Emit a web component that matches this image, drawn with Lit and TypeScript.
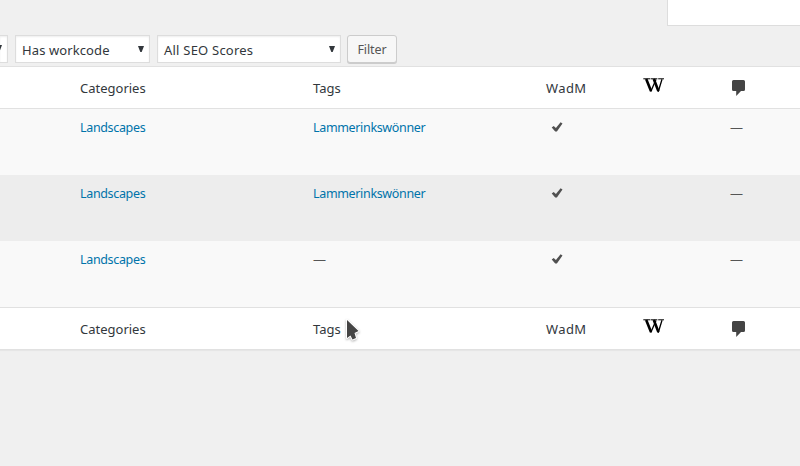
import { LitElement, html, css, svg } from "lit";
import { customElement } from "lit/decorators.js";

interface Post {
  category: string;
  tag: string;
}

const posts: Post[] = [
  { category: "Landscapes", tag: "Lammerinkswönner" },
  { category: "Landscapes", tag: "Lammerinkswönner" },
  { category: "Landscapes", tag: "" },
];

const arrow = html`<svg class="arrow" width="6" height="6" viewBox="0 0 6 6">
  <path d="M0 0H6L3.7 6H2.3Z" fill="#32373c" />
</svg>`;

const wikiIcon = html`<svg class="wiki" width="22" height="15" viewBox="0 0 22 15">
  ${svg`<g fill="none" stroke="#000">
    <path d="M0.3 .8H7.2M7.7 .8H14.4M15.2 .8H21" stroke-width="1" />
    <path d="M3.2 1L8 13M10.8 1L15.4 13" stroke-width="2.6" />
    <path d="M7.7 13.8L13 1.4M15.2 13.8L19 1.2" stroke-width="1.3" />
  </g>`}
</svg>`;

const commentIcon = html`<svg class="comment" width="14" height="16" viewBox="0 0 14 16">
  <path d="M1.5 0H11.5Q13 0 13 1.5V9.5Q13 11 11.5 11H9L4.2 16V11H1.5Q0 11 0 9.5V1.5Q0 0 1.5 0Z" fill="#444" />
</svg>`;

const checkIcon = html`<svg class="check" width="12" height="11" viewBox="0 0 12 11">
  <path d="M-.3 5.6L1.7 3.9L3.9 6L8.6 .2L10.5 1.6L4.9 9.6H3.2Z" fill="#505050" />
</svg>`;

@customElement("app-root")
export class AppRoot extends LitElement {
  static styles = css`
    :host {
      display: block;
      position: relative;
      width: 800px;
      height: 466px;
      overflow: hidden;
      background: #f0f0f0;
      font: 13px/18px "Noto Sans", "Open Sans", sans-serif;
      color: #32373c;
    }
    * { box-sizing: border-box; }
    svg { display: block; flex: none; }
    .top { height: 35px; display: flex; justify-content: flex-end; }
    .search {
      width: 133px;
      height: 26px;
      background: #fff;
      border: 1px solid #ddd;
      border-width: 0 0 1px 1px;
    }
    .filters { height: 31px; display: flex; align-items: flex-start; }
    .select {
      height: 28px;
      display: flex;
      align-items: center;
      justify-content: space-between;
      padding: 1px 5px 0 6px;
      margin-right: 7px;
      background: #fff;
      border: 1px solid #ddd;
      box-shadow: inset 0 1px 2px rgba(0, 0, 0, 0.07);
      white-space: nowrap;
      overflow: hidden;
    }
    .select .arrow { margin-top: -2px; }
    .cut { width: 8px; border-left: 0; padding: 0; }
    .cut .arrow { margin-left: -4px; }
    .workcode { width: 135px; letter-spacing: 0.1px; }
    .seo { width: 184px; margin-right: 6px; letter-spacing: 0.22px; }
    .button {
      width: 50px;
      height: 28px;
      border: 1px solid #ccc;
      border-radius: 3px;
      background: #f7f7f7;
      box-shadow: 0 1px 0 #ccc;
      color: #555;
      line-height: 27px;
      text-align: center;
      font-size: 12.5px;
      letter-spacing: -0.1px;
    }
    .table {
      height: 284px;
      background: #fff;
      border: 1px solid #e1e1e1;
      border-width: 1px 0;
      box-shadow: 0 1px 1px rgba(0, 0, 0, 0.04);
    }
    .row {
      height: 66px;
      display: grid;
      grid-template-columns: 233px 233px 96px 87px 71px;
      padding: 10px 0 0 80px;
      background: #f9f9f9;
      align-items: start;
    }
    .row.alt { background: #ededed; }
    .head, .foot { height: 42px; padding-top: 12px; background: #fff; }
    .head { border-bottom: 1px solid #e1e1e1; }
    .foot { border-top: 1px solid #e1e1e1; }
    .wiki { margin-top: -1px; margin-left: 1px; }
    .comment { margin: 1px 0 0 3px; }
    .wadm { letter-spacing: 0.4px; }
    .check { margin: 3px 0 0 6px; overflow: visible; }
    .link { color: #0073aa; font-size: 12.5px; letter-spacing: -0.34px; }
    .dash { color: #555; margin-top: -1px; }
    .comments-dash { margin-left: 1px; }
    .cursor { position: absolute; left: 344px; top: 317px; }
    .pointer { filter: drop-shadow(0 1px 1px rgba(0, 0, 0, 0.3)); }
  `;

  private heading(kind: string) {
    return html`<div class="row ${kind}">
      <span>Categories</span><span>Tags</span><span class="wadm">WadM</span>${wikiIcon}${commentIcon}
    </div>`;
  }

  render() {
    return html`
      <div class="top"><div class="search"></div></div>
      <div class="filters">
        <div class="select cut">${arrow}</div>
        <div class="select workcode"><span>Has workcode</span>${arrow}</div>
        <div class="select seo"><span>All SEO Scores</span>${arrow}</div>
        <div class="button">Filter</div>
      </div>
      <div class="table">
        ${this.heading("head")}
        ${posts.map(
          (p, i) => html`<div class="row ${i % 2 ? "alt" : ""}">
            <span class="link">${p.category}</span>
            ${p.tag ? html`<span class="link">${p.tag}</span>` : html`<span class="dash">—</span>`}
            ${checkIcon}<span></span><span class="dash comments-dash">—</span>
          </div>`
        )}
        ${this.heading("foot")}
      </div>
      <svg class="cursor" width="18" height="27" viewBox="0 0 18 27">
        <path class="pointer" d="M3 3L14.5 14L10.5 16L12 21L8.5 22.5L6.5 18.5L3 21Z" fill="#444"
          stroke="#fff" stroke-width="2" stroke-linejoin="round" paint-order="stroke" />
      </svg>
    `;
  }
}
